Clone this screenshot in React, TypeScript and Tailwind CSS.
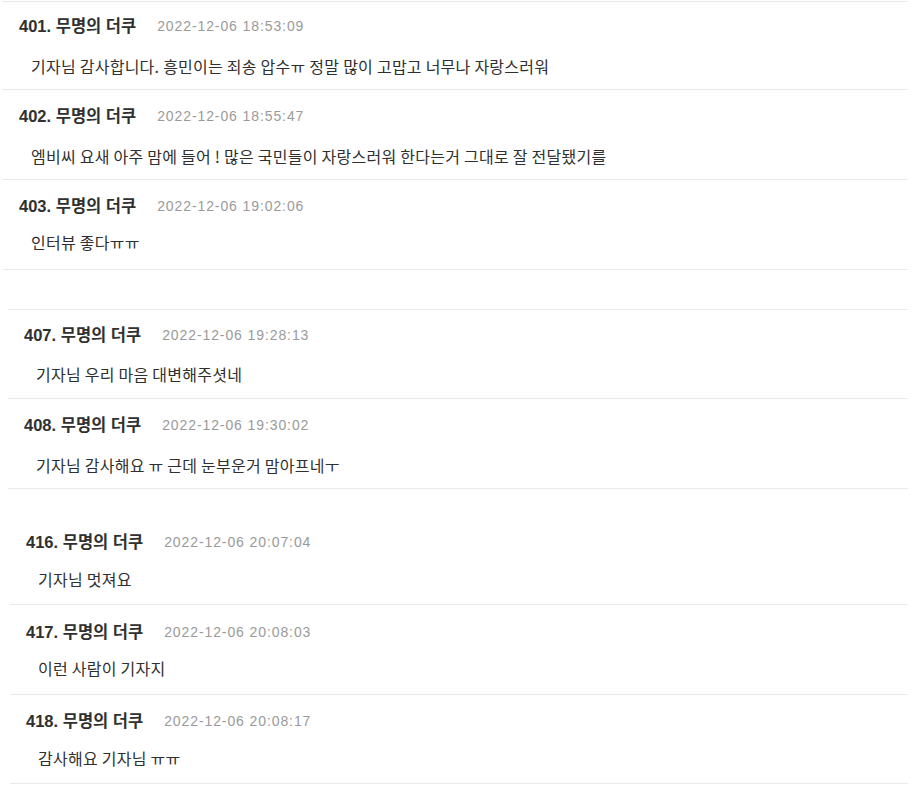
type Comment = {
  no: number;
  date: string;
  text: string;
  pt: string;
  mt: string;
  pb: string;
};

const segments: { wrap: string; items: Comment[] }[] = [
  {
    wrap: "ml-[3px] w-[905px] border-t border-[#e9e9e9] mt-px",
    items: [
      { no: 401, date: "2022-12-06 18:53:09", text: "기자님 감사합니다. 흥민이는 죄송 압수ㅠ 정말 많이 고맙고 너무나 자랑스러워", pt: "pt-[14px]", mt: "mt-5", pb: "pb-[13px]" },
      { no: 402, date: "2022-12-06 18:55:47", text: "엠비씨 요새 아주 맘에 들어 ! 많은 국민들이 자랑스러워 한다는거 그대로 잘 전달됐기를", pt: "pt-4", mt: "mt-5", pb: "pb-[13px]" },
      { no: 403, date: "2022-12-06 19:02:06", text: "인터뷰 좋다ㅠㅠ", pt: "pt-4", mt: "mt-4", pb: "pb-[17px]" },
    ],
  },
  {
    wrap: "ml-[8px] w-[900px] mt-[39px] border-t border-[#e9e9e9]",
    items: [
      { no: 407, date: "2022-12-06 19:28:13", text: "기자님 우리 마음 대변해주셧네", pt: "pt-[15px]", mt: "mt-[19px]", pb: "pb-[14px]" },
      { no: 408, date: "2022-12-06 19:30:02", text: "기자님 감사해요 ㅠ 근데 눈부운거 맘아프네ㅜ", pt: "pt-4", mt: "mt-5", pb: "pb-[13px]" },
    ],
  },
  {
    wrap: "ml-[10px] w-[898px]",
    items: [
      { no: 416, date: "2022-12-06 20:07:04", text: "기자님 멋져요", pt: "pt-[43px]", mt: "mt-[17px]", pb: "pb-[15px]" },
      { no: 417, date: "2022-12-06 20:08:03", text: "이런 사람이 기자지", pt: "pt-[17px]", mt: "mt-4", pb: "pb-4" },
      { no: 418, date: "2022-12-06 20:08:17", text: "감사해요 기자님 ㅠㅠ", pt: "pt-4", mt: "mt-[17px]", pb: "pb-[15px]" },
    ],
  },
];

function CommentRow({ c }: { c: Comment }) {
  return (
    <div className={`border-b border-[#e9e9e9] ${c.pt} ${c.pb}`}>
      <div className="flex items-center h-5 pl-4 font-['Liberation_Sans','Noto_Sans_CJK_KR',sans-serif]">
        <span className="text-[16.5px] font-bold text-[#303030] leading-5">
          {c.no}. 무명의 더쿠
        </span>
        <span className="ml-[21px] text-[14px] tracking-[0.9px] text-[#9a9a9a] leading-5">
          {c.date}
        </span>
      </div>
      <p className={`${c.mt} pl-7 h-5 text-[16px] tracking-[0.25px] leading-5 text-[#2f2f2f] font-['Noto_Sans_CJK_KR',sans-serif]`}>
        {c.text}
      </p>
    </div>
  );
}

export default function App() {
  return (
    <div className="w-[916px] h-[790px] bg-white overflow-hidden">
      {segments.map((s, i) => (
        <div key={i} className={s.wrap}>
          {s.items.map((c) => (
            <CommentRow key={c.no} c={c} />
          ))}
        </div>
      ))}
    </div>
  );
}
